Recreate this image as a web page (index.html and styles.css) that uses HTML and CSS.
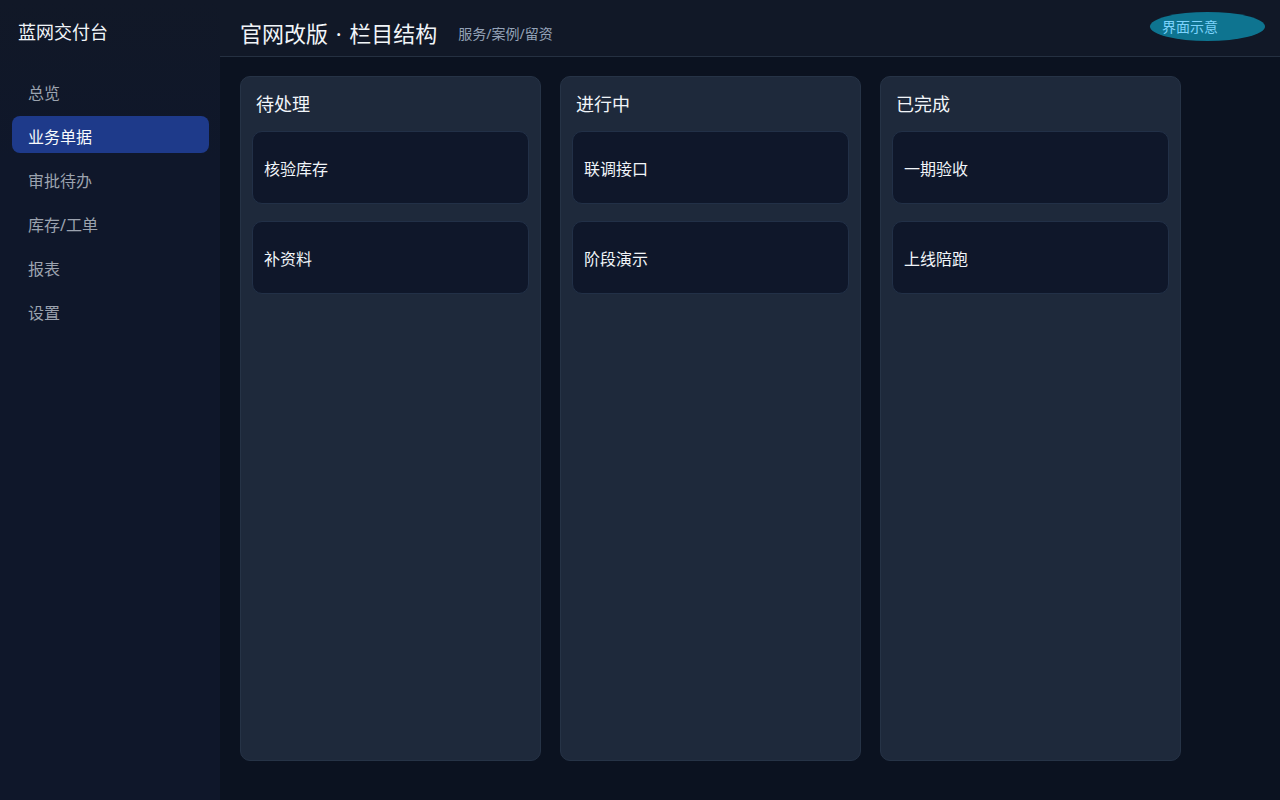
FILE: index.html
```html
<!DOCTYPE html>
<html lang="zh">
<head>
<meta charset="utf-8">
<title>蓝网交付台</title>
<link rel="stylesheet" href="styles.css">
</head>
<body>
<div class="app">
  <aside class="sidebar">
    <div class="brand">蓝网交付台</div>
    <nav class="nav">
      <div class="nav-item">总览</div>
      <div class="nav-item active">业务单据</div>
      <div class="nav-item">审批待办</div>
      <div class="nav-item">库存/工单</div>
      <div class="nav-item">报表</div>
      <div class="nav-item">设置</div>
    </nav>
  </aside>
  <main class="main">
    <header class="header">
      <h1 class="title">官网改版 · 栏目结构</h1>
      <span class="subtitle">服务/案例/留资</span>
      <span class="badge">界面示意</span>
    </header>
    <section class="board">
      <div class="column">
        <div class="col-title">待处理</div>
        <div class="card">核验库存</div>
        <div class="card">补资料</div>
      </div>
      <div class="column">
        <div class="col-title">进行中</div>
        <div class="card">联调接口</div>
        <div class="card">阶段演示</div>
      </div>
      <div class="column">
        <div class="col-title">已完成</div>
        <div class="card">一期验收</div>
        <div class="card">上线陪跑</div>
      </div>
    </section>
  </main>
</div>
</body>
</html>
```

FILE: styles.css
```css
* { box-sizing: border-box; }
html, body {
  margin: 0;
  padding: 0;
  height: 100%;
  background: #0b1220;
  font-family: "Noto Sans", "Noto Sans CJK SC", sans-serif;
  color: #e5e7eb;
}
.app {
  display: flex;
  height: 800px;
}
.sidebar {
  width: 220px;
  flex: none;
  background: linear-gradient(180deg, #111827 0%, #0f172a 20%, #0f172a 100%);
  padding: 0 11px 0 12px;
}
.brand {
  height: 64px;
  padding: 18px 0 0 6px;
  font-size: 18px;
  line-height: 28px;
  color: #f1f5f9;
}
.nav {
  display: flex;
  flex-direction: column;
  gap: 7px;
  padding-top: 8px;
}
.nav-item {
  height: 37px;
  padding: 2px 16px 0;
  display: flex;
  align-items: center;
  font-size: 16px;
  color: #9ca3af;
  border-radius: 8px;
}
.nav-item.active {
  background: #1e3a8a;
  color: #f8fafc;
}
.main {
  flex: 1;
  display: flex;
  flex-direction: column;
  position: relative;
}
.header {
  height: 57px;
  background: #111827;
  border-bottom: 1px solid #253041;
  display: flex;
  align-items: center;
  padding: 8px 20px 0 20px;
  gap: 21px;
}
.title {
  margin: 0;
  font-size: 22px;
  font-weight: 400;
  word-spacing: 2px;
  color: #f1f5f9;
}
.subtitle {
  font-size: 14px;
  color: #94a3b8;
  padding-top: 1px;
}
.badge {
  position: absolute;
  top: 12px;
  right: 15px;
  width: 115px;
  height: 29px;
  border-radius: 50%;
  background: #0e7490;
  color: #7dd3fc;
  font-size: 14px;
  line-height: 29px;
  padding-left: 12px;
}
.board {
  display: flex;
  gap: 19px;
  padding: 19px 20px 39px 20px;
  flex: 1;
}
.column {
  width: 301px;
  background: #1e293b;
  border: 1px solid #263346;
  border-radius: 10px;
  padding: 14px 11px;
  display: flex;
  flex-direction: column;
  gap: 17px;
}
.col-title {
  font-size: 18px;
  line-height: 26px;
  color: #f1f5f9;
  padding-left: 4px;
  margin-top: 0;
  margin-bottom: -3px;
}
.card {
  height: 73px;
  background: #0f172a;
  border: 1px solid #223047;
  border-radius: 10px;
  padding: 0 11px;
  display: flex;
  align-items: center;
  font-size: 16px;
  color: #f1f5f9;
}
```
